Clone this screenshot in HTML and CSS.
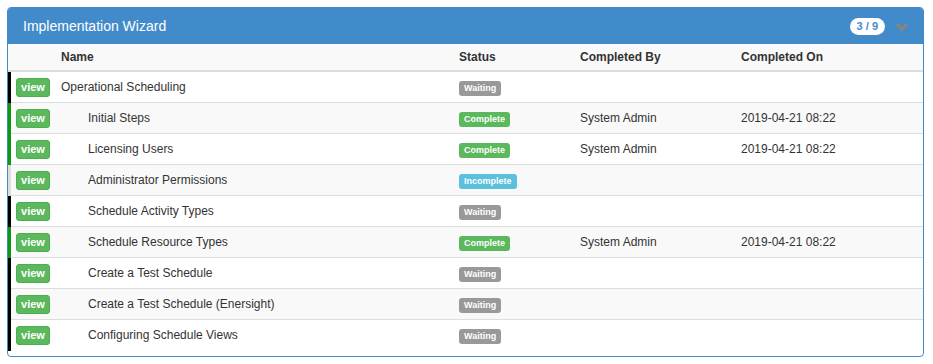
FILE: index.html
```html
<!DOCTYPE html>
<html>
<head>
<meta charset="utf-8">
<link rel="stylesheet" href="styles.css">
</head>
<body>
<div class="panel">
  <div class="panel-heading">
    <span class="title">Implementation Wizard</span>
    <div class="tools">
      <span class="count">3 / 9</span>
      <svg class="chev" width="14" height="10" viewBox="0 0 14 10"><path d="M1.8 2 L7 7.2 L12.2 2" fill="none" stroke="#858585" stroke-width="3.4"/></svg>
    </div>
  </div>
  <div class="table">
    <div class="thead">
      <div></div><div>Name</div><div>Status</div><div>Completed By</div><div>Completed On</div>
    </div>
    <div class="row waiting">
      <div><span class="btn">view</span></div><div>Operational Scheduling</div><div><span class="label lwait">Waiting</span></div><div></div><div></div>
    </div>
    <div class="row complete">
      <div><span class="btn">view</span></div><div class="child">Initial Steps</div><div><span class="label lcomp">Complete</span></div><div>System Admin</div><div>2019-04-21 08:22</div>
    </div>
    <div class="row complete">
      <div><span class="btn">view</span></div><div class="child">Licensing Users</div><div><span class="label lcomp">Complete</span></div><div>System Admin</div><div>2019-04-21 08:22</div>
    </div>
    <div class="row incomplete">
      <div><span class="btn">view</span></div><div class="child">Administrator Permissions</div><div><span class="label linc">Incomplete</span></div><div></div><div></div>
    </div>
    <div class="row waiting">
      <div><span class="btn">view</span></div><div class="child">Schedule Activity Types</div><div><span class="label lwait">Waiting</span></div><div></div><div></div>
    </div>
    <div class="row complete">
      <div><span class="btn">view</span></div><div class="child">Schedule Resource Types</div><div><span class="label lcomp">Complete</span></div><div>System Admin</div><div>2019-04-21 08:22</div>
    </div>
    <div class="row waiting">
      <div><span class="btn">view</span></div><div class="child">Create a Test Schedule</div><div><span class="label lwait">Waiting</span></div><div></div><div></div>
    </div>
    <div class="row waiting">
      <div><span class="btn">view</span></div><div class="child">Create a Test Schedule (Enersight)</div><div><span class="label lwait">Waiting</span></div><div></div><div></div>
    </div>
    <div class="row waiting last">
      <div><span class="btn">view</span></div><div class="child">Configuring Schedule Views</div><div><span class="label lwait">Waiting</span></div><div></div><div></div>
    </div>
  </div>
</div>
</body>
</html>
```
FILE: styles.css
```css
html, body { background: #fff; }
body {
  margin: 7px;
  font-family: "Liberation Sans", Arial, sans-serif;
  font-size: 12px;
  color: #333;
}
.panel {
  width: 917px;
  box-sizing: border-box;
  border: 1px solid #428bca;
  border-radius: 4px;
  padding-bottom: 5px;
  overflow: hidden;
}
.panel-heading {
  height: 36px;
  background: #428bca;
  display: flex;
  align-items: center;
  justify-content: space-between;
  padding: 0 15px;
  margin: -1px -1px 0 -1px;
  padding-top: 1px;
  border-radius: 3px 3px 0 0;
}
.title {
  color: #fff;
  font-size: 14px;
  padding-left: 1px;
}
.tools {
  display: flex;
  align-items: center;
  gap: 10px;
}
.count {
  background: #fff;
  color: #428bca;
  font-size: 11px;
  font-weight: bold;
  border-radius: 9px;
  padding: 3px 7px;
  line-height: 11px;
}
.chev { display: block; margin-top: 1px; }
.thead, .row {
  display: grid;
  grid-template-columns: 48px 398px 121px 161px 1fr;
  align-items: center;
}
.thead {
  height: 26px;
  background: #f9f9f9;
  border-bottom: 2px solid #ddd;
  font-weight: bold;
}
.thead > div, .row > div { padding-left: 5px; white-space: nowrap; }
.thead > div:first-child { padding-left: 0; }
.row {
  grid-template-columns: 45px 398px 121px 161px 1fr;
  height: 31px;
  box-sizing: border-box;
  border-left: 3px solid #000;
  box-shadow: inset 0 -1px 0 #ddd;
}
.row > div { padding-bottom: 2px; }
.row > div:first-child { padding-left: 5px; padding-bottom: 0; }
.row > div:nth-child(3) { padding-bottom: 0; }
.row:nth-child(odd) { background: #f9f9f9; }
.row.last { box-shadow: none; }
.row.complete { border-left-color: #0c9a0c; }
.row.incomplete { border-left-color: #ddd; }
.row > div.child { padding-left: 32px; }
.btn {
  display: inline-block;
  vertical-align: middle;
  box-sizing: border-box;
  height: 19px;
  width: 34px;
  text-align: center;
  background: #5cb85c;
  border: 1px solid #4cae4c;
  border-radius: 3px;
  color: #fff;
  font-size: 11px;
  font-weight: bold;
  line-height: 17px;
}
.label {
  display: inline-block;
  font-size: 9px;
  font-weight: bold;
  color: #fff;
  line-height: 9px;
  padding: 3px 5px;
  border-radius: 3px;
}
.lwait { background: #999; }
.lcomp { background: #5cb85c; }
.linc { background: #5bc0de; }
```
